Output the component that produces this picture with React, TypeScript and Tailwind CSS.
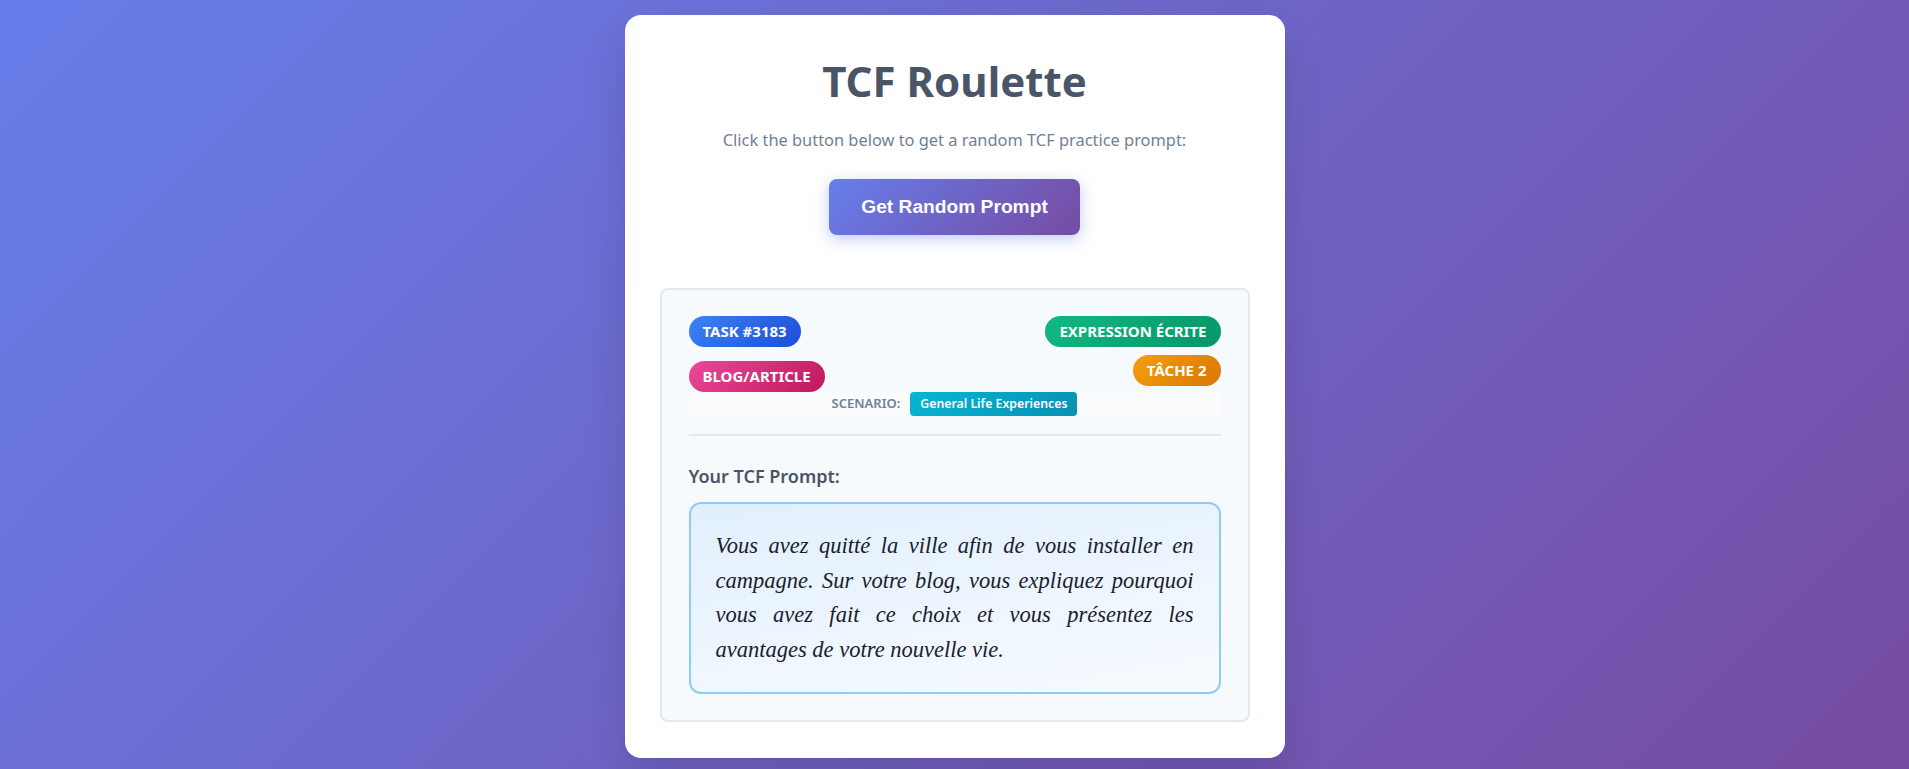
import React from "react";

const badgeBase =
  "inline-flex h-[31px] items-center rounded-full px-[14px] text-[15px] font-bold uppercase text-white";

export default function App() {
  return (
    <div
      className="min-h-screen bg-[linear-gradient(135deg,#667eea_0%,#764ba2_100%)] px-4 pt-[15px] pb-3"
      style={{ fontFamily: '"Noto Sans", "Open Sans", sans-serif' }}
    >
      <div className="mx-auto w-[660px] rounded-2xl bg-white px-[35px] pt-[40px] pb-[36px] shadow-[0_20px_40px_rgba(0,0,0,0.12)]">
        <h1 className="text-center text-[42px] font-bold leading-[52px] text-[#4a5568]">
          TCF Roulette
        </h1>
        <p className="mt-[21px] text-center text-[16.4px] leading-6 text-[#718096]">
          Click the button below to get a random TCF practice prompt:
        </p>

        <div className="mt-[27px] flex justify-center">
          <button
            className="rounded-lg bg-[linear-gradient(135deg,#667eea_0%,#764ba2_100%)] px-8 py-4 text-[19.2px] font-bold leading-6 text-white shadow-[0_4px_15px_rgba(102,126,234,0.4)]"
            style={{ fontFamily: '"Liberation Sans", Arial, sans-serif' }}
          >
            Get Random Prompt
          </button>
        </div>

        <div className="mt-[53px] rounded-lg border-2 border-[#e2e8f0] bg-[#f7fafc] px-[27px] py-[26px]">
          <div className="flex items-start justify-between">
            <div className="flex flex-col items-start gap-[14px]">
              <span
                className={`${badgeBase} bg-[linear-gradient(135deg,#3b82f6_0%,#1d4ed8_100%)]`}
              >
                Task #3183
              </span>
              <span
                className={`${badgeBase} h-[30px] bg-[linear-gradient(135deg,#ec4899_0%,#be185d_100%)]`}
              >
                Blog/Article
              </span>
            </div>
            <div className="flex flex-col items-end gap-[8px]">
              <span
                className={`${badgeBase} bg-[linear-gradient(135deg,#10b981_0%,#059669_100%)]`}
              >
                Expression écrite
              </span>
              <span
                className={`${badgeBase} bg-[linear-gradient(135deg,#f59e0b_0%,#d97706_100%)]`}
              >
                Tâche 2
              </span>
            </div>
          </div>

          <div className="flex h-6 items-center justify-center gap-[10px] bg-white/30">
            <span className="text-[13px] font-semibold uppercase text-[#718096]">
              Scenario:
            </span>
            <span className="inline-flex h-6 items-center rounded-[4px] bg-[linear-gradient(135deg,#06b6d4_0%,#0891b2_100%)] px-[10px] text-[12.3px] font-semibold text-white">
              General Life Experiences
            </span>
          </div>

          <div className="mt-[18px] h-[2px] bg-[#e2e8f0]" />

          <h3 className="mt-[27px] text-[18px] font-semibold leading-[27px] text-[#4a5568]">
            Your TCF Prompt:
          </h3>

          <div className="mt-[12px] rounded-xl border-2 border-[#90caf9] bg-[linear-gradient(170deg,#e1effd_0%,#f7fbff_100%)] px-[25px] py-[25px]">
            <p
              className="text-justify text-[22.5px] italic leading-[34.5px] text-[#1a202c]"
              style={{ fontFamily: '"Liberation Serif", Georgia, serif' }}
            >
              Vous avez quitté la ville afin de vous installer en campagne. Sur
              votre blog, vous expliquez pourquoi vous avez fait ce choix et
              vous présentez les avantages de votre nouvelle vie.
            </p>
          </div>
        </div>
      </div>
    </div>
  );
}
